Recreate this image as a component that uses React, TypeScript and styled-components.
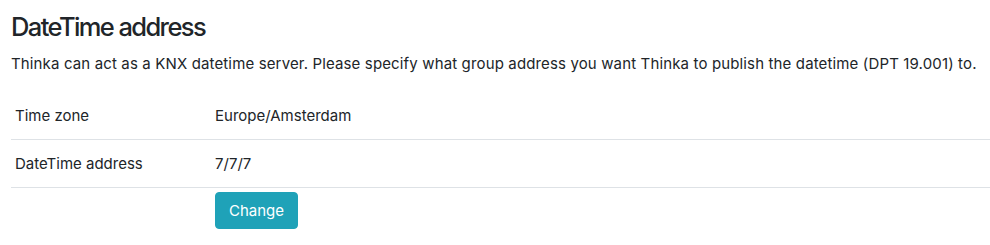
import React from "react";
import styled, { createGlobalStyle } from "styled-components";

const GlobalStyle = createGlobalStyle`
  html, body {
    margin: 0;
    padding: 0;
    background: #ffffff;
  }
  body {
    font-family: Inter, "Noto Sans", "Liberation Sans", sans-serif;
    font-size: 15px;
    line-height: 24px;
    color: #212529;
  }
`;

const Page = styled.div`
  padding: 11px 0 0 11px;
`;

const Title = styled.h2`
  margin: 0 0 10px;
  font-size: 25.5px;
  font-weight: 500;
  line-height: 31px;
  letter-spacing: -1.6px;
  color: #212529;
`;

const Intro = styled.p`
  margin: 0 0 16px;
  font-size: 15px;
  letter-spacing: 0.14px;
  white-space: nowrap;
`;

const Table = styled.table`
  width: 100%;
  border-collapse: collapse;
`;

const Row = styled.tr<{ $divider?: boolean }>`
  border-bottom: ${(p) => (p.$divider ? "1px solid #dee2e6" : "none")};
`;

const LabelCell = styled.td`
  width: 192px;
  padding: 12px 4px 11px;
  vertical-align: top;
`;

const ValueCell = styled.td<{ $compact?: boolean }>`
  padding: ${(p) => (p.$compact ? "4px 4px" : "12px 4px 11px")};
  vertical-align: top;
`;

const Button = styled.button`
  font-family: inherit;
  font-size: 15px;
  line-height: 23px;
  color: #ffffff;
  background: #1fa2b8;
  border: 1px solid #1fa2b8;
  border-radius: 4px;
  padding: 6px 13px;
  cursor: pointer;
`;

export default function App() {
  return (
    <Page>
      <GlobalStyle />
      <Title>DateTime address</Title>
      <Intro>
        Thinka can act as a KNX datetime server. Please specify what group address you want Thinka to
        publish the datetime (DPT 19.001) to.
      </Intro>
      <Table>
        <tbody>
          <Row $divider>
            <LabelCell>Time zone</LabelCell>
            <ValueCell>Europe/Amsterdam</ValueCell>
          </Row>
          <Row $divider>
            <LabelCell>DateTime address</LabelCell>
            <ValueCell>7/7/7</ValueCell>
          </Row>
          <Row>
            <LabelCell />
            <ValueCell $compact>
              <Button>Change</Button>
            </ValueCell>
          </Row>
        </tbody>
      </Table>
    </Page>
  );
}
